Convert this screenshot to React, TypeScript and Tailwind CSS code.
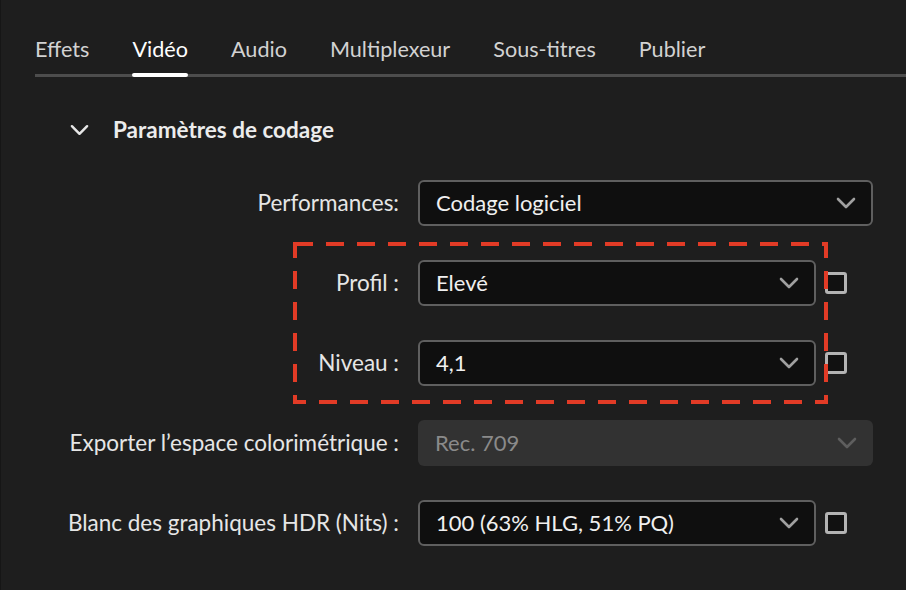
const tabs = ["Effets", "Vidéo", "Audio", "Multiplexeur", "Sous-titres", "Publier"];

function Chevron({ className }: { className?: string }) {
  return (
    <svg viewBox="0 0 20 12" className={className} fill="none">
      <path d="M2 2 L10 10 L18 2" stroke="currentColor" strokeWidth="2.6" strokeLinecap="round" strokeLinejoin="round" />
    </svg>
  );
}

function Checkbox() {
  return <div className="w-[22px] h-[22px] rounded-[3px] border-[3px] border-[#b3b3b3] bg-[#111111] shrink-0" />;
}

interface SelectProps {
  value: string;
  disabled?: boolean;
  wide?: boolean;
}

function Select({ value, disabled = false, wide = false }: SelectProps) {
  return (
    <div
      className={
        disabled
          ? "flex items-center justify-between h-[46px] w-[455px] rounded-[6px] bg-[#323232] pl-[17px] pr-[16px] shrink-0"
          : wide
            ? "flex items-center justify-between h-[46px] w-[455px] rounded-[6px] bg-[#0f0f0f] border-2 border-[#5f5f5f] pl-[16px] pr-[15px] shrink-0"
            : "flex items-center justify-between h-[46px] w-[398px] rounded-[6px] bg-[#0f0f0f] border-2 border-[#5f5f5f] pl-[16px] pr-[15px] shrink-0"
      }
    >
      <span className={disabled ? "text-[22px] text-[#8a8a8a]" : "text-[22px] text-[#f0f0f0]"}>{value}</span>
      <Chevron className={disabled ? "w-[20px] h-[12px] text-[#5e5e5e]" : "w-[20px] h-[12px] text-[#a0a0a0]"} />
    </div>
  );
}

function Row({ label, children }: { label: string; children: React.ReactNode }) {
  return (
    <div className="flex items-center h-[46px] gap-[19px]">
      <div className="w-[398px] text-right text-[22.5px] text-[#e6e6e6] whitespace-nowrap shrink-0">{label}</div>
      {children}
    </div>
  );
}

export default function App() {
  return (
    <div className="relative w-[906px] h-[590px] bg-[#1e1e1e] border-l border-[#161616] overflow-hidden font-['Lato',_sans-serif]">
      <div className="ml-[34px] mt-[36px] flex gap-[43px] border-b-[3px] border-[#4d4d4d]">
        {tabs.map((t) => (
          <div key={t} className="relative pb-[11px]">
            <span className={t === "Vidéo" ? "text-[21.6px] leading-[26px] text-white" : "text-[21.6px] leading-[26px] text-[#d2d2d2]"}>{t}</span>
            {t === "Vidéo" && <div className="absolute left-0 right-0 bottom-[-3px] h-[4px] rounded-full bg-white" />}
          </div>
        ))}
      </div>

      <div className="flex items-center gap-[24px] ml-[69px] mt-[36px]">
        <Chevron className="w-[19px] h-[12px] text-[#e6e6e6]" />
        <span className="text-[22.5px] font-bold text-[#ececec]">Paramètres de codage</span>
      </div>

      <div className="flex flex-col gap-[34px] mt-[33px]">
        <Row label="Performances:">
          <Select value="Codage logiciel" wide />
        </Row>
        <Row label="Profil :">
          <Select value="Elevé" />
          <div className="ml-[-10px]"><Checkbox /></div>
        </Row>
        <Row label="Niveau :">
          <Select value="4,1" />
          <div className="ml-[-10px]"><Checkbox /></div>
        </Row>
        <Row label="Exporter l’espace colorimétrique :">
          <Select value="Rec. 709" disabled />
        </Row>
        <Row label="Blanc des graphiques HDR (Nits) :">
          <Select value="100 (63% HLG, 51% PQ)" />
          <div className="ml-[-10px]"><Checkbox /></div>
        </Row>
      </div>

      <svg className="absolute left-[292px] top-[242px]" width="535" height="162">
        <rect x="2" y="2" width="531" height="158" fill="none" stroke="#e23b26" strokeWidth="4" strokeDasharray="18 13" />
      </svg>
    </div>
  );
}
